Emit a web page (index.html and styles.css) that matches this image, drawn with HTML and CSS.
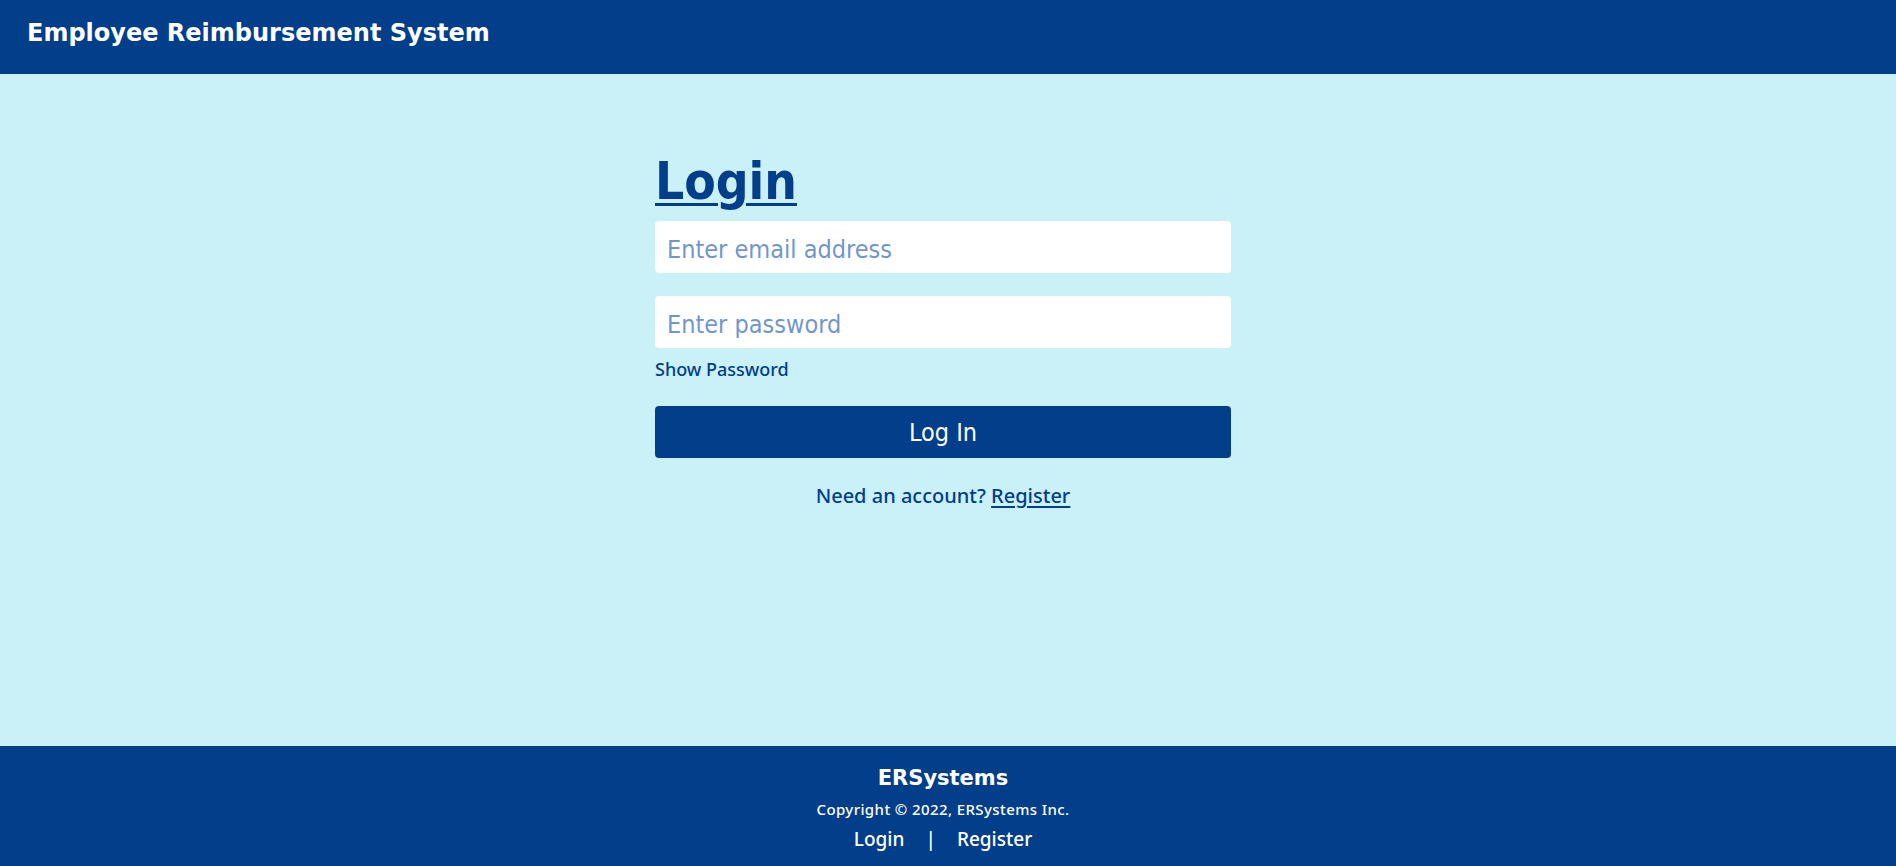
FILE: index.html
```html
<!DOCTYPE html>
<html lang="en">
<head>
<meta charset="utf-8">
<title>Employee Reimbursement System</title>
<link rel="stylesheet" href="styles.css">
</head>
<body>
<header class="topbar">
  <h1 class="brand">Employee Reimbursement System</h1>
</header>
<main class="content">
  <div class="login-box">
    <h2 class="login-title">Login</h2>
    <form class="login-form">
      <input class="field" type="email" placeholder="Enter email address">
      <input class="field field-gap" type="password" placeholder="Enter password">
      <div class="show-pass">Show Password</div>
      <button class="submit" type="button">Log In</button>
      <p class="register-hint">Need an account? <a class="register-link" href="#">Register</a></p>
    </form>
  </div>
</main>
<footer class="footer">
  <div class="footer-brand">ERSystems</div>
  <div class="copyright">Copyright © 2022, ERSystems Inc.</div>
  <nav class="footer-links">
    <a href="#">Login</a><span class="sep">|</span><a href="#">Register</a>
  </nav>
</footer>
</body>
</html>
```

FILE: styles.css
```css
html, body {
  margin: 0;
  padding: 0;
  height: 100%;
}
body {
  display: flex;
  flex-direction: column;
  min-height: 100vh;
  background: #caf0f8;
  font-family: "Noto Sans", "DejaVu Sans", sans-serif;
  color: #023e8a;
}
.topbar {
  height: 74px;
  background: #023e8a;
  display: flex;
  align-items: center;
  padding-left: 27px;
  box-sizing: border-box;
}
.brand {
  margin: 0;
  color: #fff;
  font-family: "DejaVu Sans", sans-serif;
  font-size: 24px;
  font-weight: 700;
  line-height: 30px;
  padding-bottom: 9px;
}
.content {
  flex: 1;
  padding-top: 78px;
  padding-right: 10px;
}
.login-box {
  width: 576px;
  margin: 0 auto;
}
.login-title {
  margin: 0;
  font-family: "DejaVu Sans Condensed", "DejaVu Sans", sans-serif;
  font-stretch: condensed;
  font-size: 51px;
  line-height: 60px;
  font-weight: 700;
  text-decoration: underline;
  text-decoration-thickness: 3px;
  text-underline-offset: 4px;
  color: #023e8a;
}
.login-form {
  margin-top: 9px;
  display: flex;
  flex-direction: column;
}
.field {
  height: 52px;
  box-sizing: border-box;
  border: none;
  border-radius: 4px;
  background: #fff;
  padding: 4px 12px 0;
  font-family: "DejaVu Sans Condensed", "DejaVu Sans", sans-serif;
  font-stretch: condensed;
  font-size: 25px;
  color: #023e8a;
  outline: none;
}
.field::placeholder {
  color: #7197ca;
}
.field-gap {
  margin-top: 23px;
}
.show-pass {
  margin-top: 9px;
  font-size: 18px;
  line-height: 24px;
  font-weight: 500;
  color: #023e8a;
}
.submit {
  margin-top: 25px;
  height: 52px;
  border: none;
  border-radius: 4px;
  background: #023e8a;
  color: #fff;
  font-family: "DejaVu Sans Condensed", "DejaVu Sans", sans-serif;
  font-stretch: condensed;
  font-size: 25px;
  padding: 0;
}
.register-hint {
  margin: 25px 0 0;
  text-align: center;
  font-size: 20px;
  line-height: 26px;
  font-weight: 500;
}
.register-link {
  color: #023e8a;
  text-decoration: underline;
  text-underline-offset: 3px;
}
.footer {
  height: 120px;
  box-sizing: border-box;
  background: #023e8a;
  color: #fff;
  text-align: center;
  padding-top: 17px;
  padding-right: 10px;
}
.footer-brand {
  font-family: "DejaVu Sans", sans-serif;
  font-size: 21px;
  font-weight: 700;
  line-height: 30px;
}
.copyright {
  margin-top: 6px;
  font-size: 15px;
  line-height: 20px;
  font-weight: 500;
  letter-spacing: 0.4px;
}
.footer-links {
  margin-top: 7px;
  font-size: 19px;
  line-height: 26px;
  font-weight: 500;
}
.footer-links a {
  color: #fff;
  text-decoration: none;
}
.sep {
  margin: 0 21px;
}
```
